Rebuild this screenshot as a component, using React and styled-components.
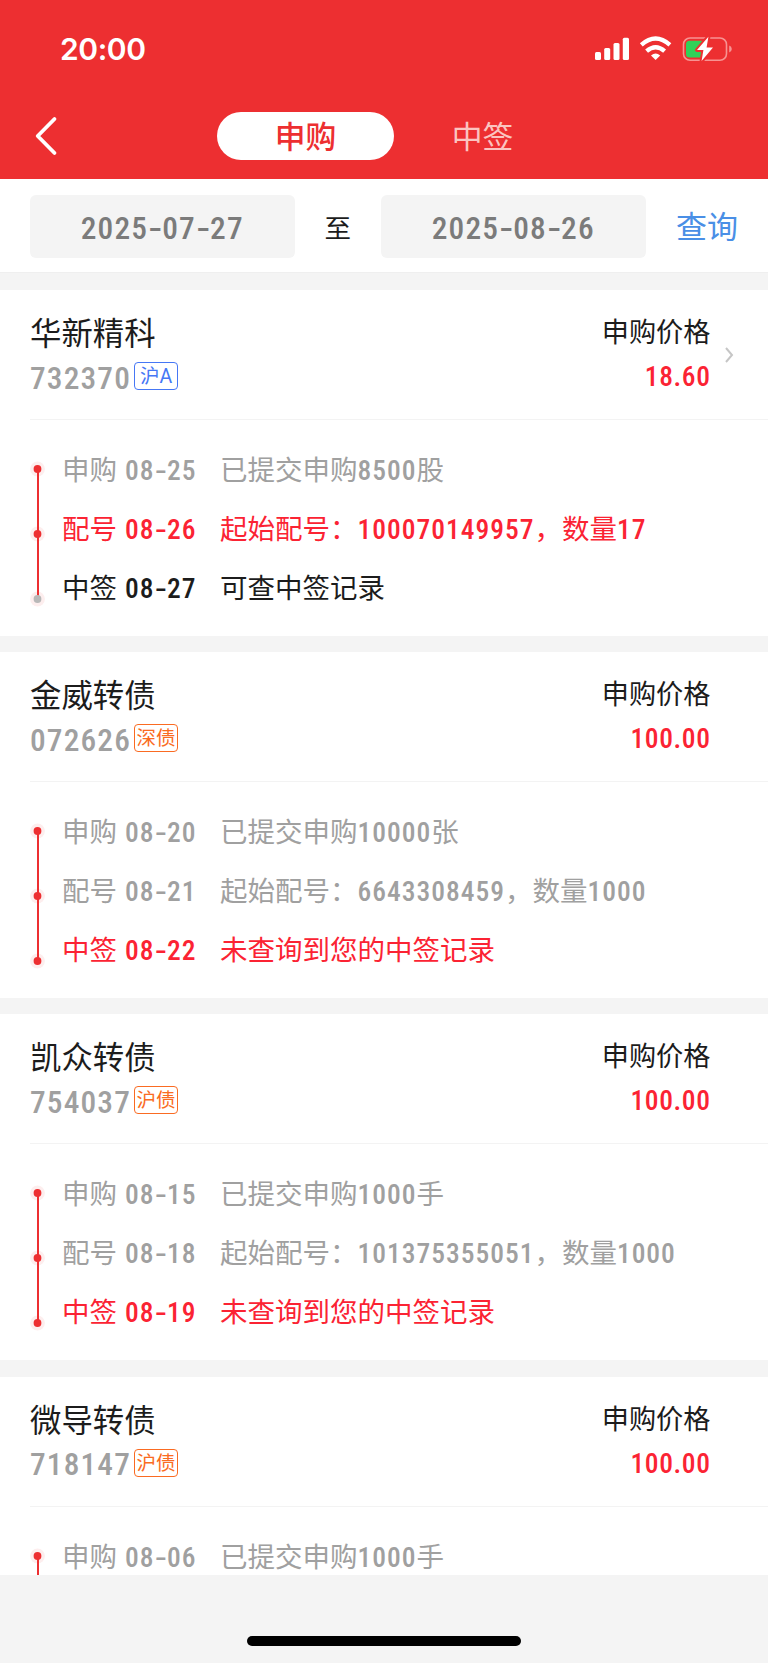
import React from "react";
import styled, { createGlobalStyle } from "styled-components";

const RED = "#ed2f31";
const TONES = { muted: "#a0a0a0", active: "#fb2333", dark: "#1c1c1c" };
const TAGS = { blue: "#4677f5", orange: "#fa6b22" };

const GlobalStyle = createGlobalStyle`
  * { box-sizing: border-box; }
  body {
    margin: 0;
    background: #f4f4f4;
    font-family: Roboto, "Noto Sans CJK SC", sans-serif;
    color: #1c1c1c;
  }
  button { border: 0; padding: 0; background: none; font-family: inherit; }
`;

const Screen = styled.div`
  width: 768px;
  height: 1663px;
  display: flex;
  flex-direction: column;
  overflow: hidden;
  background: #f4f4f4;
`;

const Header = styled.header`
  height: 179px;
  flex: none;
  background: ${RED};
`;

const StatusBar = styled.div`
  height: 98px;
  padding: 0 36px 0 60px;
  display: flex;
  align-items: center;
  justify-content: space-between;
`;

const Clock = styled.span`
  color: #fff;
  font: 600 30px/40px Inter, sans-serif;
  letter-spacing: -0.4px;
`;

const StatusIcons = styled.svg`
  display: block;
`;

const NavBar = styled.nav`
  height: 76px;
  display: flex;
  align-items: center;
`;

const BackButton = styled.button`
  width: 217px;
  height: 48px;
  padding-left: 33px;
  display: flex;
  align-items: center;
`;

const Tab = styled.button`
  width: 177px;
  height: 48px;
  border-radius: 24px;
  font-size: 30.8px;
  line-height: 51px;
  background: ${(p) => (p.$active ? "#fff" : "transparent")};
  color: ${(p) => (p.$active ? RED : "#fbc4c0")};
  font-weight: ${(p) => (p.$active ? 500 : 400)};
`;

const FilterBar = styled.section`
  height: 94px;
  flex: none;
  padding: 16px 30px 0;
  display: flex;
  align-items: flex-start;
  background: #fff;
  border-bottom: 1px solid #efefef;
`;

const DateBox = styled.div`
  width: 264.5px;
  height: 63px;
  border-radius: 6px;
  background: #f4f4f4;
  color: #7b7b7b;
  font-size: 31.4px;
  line-height: 66px;
  text-align: center;
`;

const Until = styled.span`
  width: 86.5px;
  font-size: 26.5px;
  line-height: 67px;
  text-align: center;
`;

const QueryButton = styled.button`
  margin-left: auto;
  color: #4a8fe6;
  font-size: 31px;
  line-height: 65px;
`;

const List = styled.main`
  height: 1302px;
  flex: none;
  padding-top: 17px;
  display: flex;
  flex-direction: column;
  gap: 16.2px;
  overflow: hidden;
`;

const Card = styled.article`
  height: 346px;
  flex: none;
  background: #fff;
`;

const CardHead = styled.div`
  height: 130px;
  margin-left: 30px;
  padding: 22px 32px 0 0;
  display: flex;
  border-bottom: 1px solid #f3f3f3;
`;

const Identity = styled.div`
  flex: 1;
  padding-top: 1px;
`;

const Name = styled.div`
  font-size: 31.4px;
  line-height: 44px;
`;

const CodeLine = styled.div`
  height: 42px;
  display: flex;
  align-items: center;
  color: #a0a0a0;
  font-size: 31.4px;
`;

const CodeSlot = styled.span`
  width: 104px;
`;

const Tag = styled.span`
  width: 44px;
  height: 28px;
  margin-top: -4px;
  border: 1px solid currentColor;
  border-radius: 4px;
  color: ${(p) => TAGS[p.$kind]};
  font-size: 19.5px;
  line-height: 27px;
  display: flex;
  justify-content: center;
  white-space: nowrap;
`;

const PriceBlock = styled.div`
  width: 120.5px;
  text-align: right;
`;

const PriceLabel = styled.div`
  font-size: 27.2px;
  line-height: 42px;
`;

const Price = styled.div`
  color: ${TONES.active};
  font-size: 27.5px;
  line-height: 45px;
`;

const ArrowSlot = styled.div`
  width: 25.5px;
  padding: 34px 0 0 13.5px;
`;

const CardBody = styled.div`
  display: flex;
  padding-left: 30px;
`;

const Track = styled.svg`
  display: block;
  margin-top: 41px;
  flex: none;
`;

const Steps = styled.div`
  flex: 1;
  padding: 21px 0 0 17px;
`;

const Step = styled.div`
  height: 59px;
  display: grid;
  grid-template-columns: 63px 95px 1fr;
  color: ${(p) => TONES[p.$tone]};
  font-size: 27.5px;
  line-height: 59px;
  white-space: nowrap;
`;

const Digits = styled.span`
  font-weight: 500;
  font-stretch: 75%;
  letter-spacing: ${(p) => (p.$tight ? "0.022em" : "0.036em")};
`;

const Dash = styled.span`
  font-family: Inter, sans-serif;
  letter-spacing: -0.01em;
`;

const HomeArea = styled.footer`
  flex: 1;
  display: flex;
  justify-content: center;
  align-items: flex-end;
  padding-bottom: 17px;
`;

const HomeIndicator = styled.div`
  width: 274px;
  height: 10px;
  border-radius: 5px;
  background: #000;
`;

const Figures = ({ children, tight }) => (
  <Digits $tight={tight}>
    {children.split(/(-)/).map((part, i) => (part === "-" ? <Dash key={i}>-</Dash> : part))}
  </Digits>
);

const Mixed = ({ children }) =>
  children.split(/(\d+)/).map((part, i) => (/^\d/.test(part) ? <Digits key={i}>{part}</Digits> : part));

const PhoneStatus = () => (
  <StatusIcons width="138" height="30" viewBox="594 34 138 30" fill="none">
    <g fill="#fff">
      <rect x="595" y="52" width="6" height="8" rx="1.5" />
      <rect x="604.2" y="48" width="6" height="12" rx="1.5" />
      <rect x="613.5" y="43" width="6" height="17" rx="1.5" />
      <rect x="622.8" y="37.8" width="6.2" height="22.2" rx="1.5" />
      <path d="M655.6 60 L651 55.4 Q655.6 51.4 660.2 55.4 Z" />
    </g>
    <path d="M641.3 44.8 Q655.6 32.2 669.9 44.8" stroke="#fff" strokeWidth="4.3" />
    <path d="M646.6 51.2 Q655.6 43.2 664.6 51.2" stroke="#fff" strokeWidth="4.3" />
    <rect x="683.5" y="38" width="43" height="22.3" rx="6.5" stroke="#f79392" strokeWidth="1.6" />
    <path d="M729.2 45.5 Q731.8 46.2 731.8 49 Q731.8 51.8 729.2 52.5 Z" fill="#f79392" />
    <rect x="686" y="40.7" width="18" height="16.8" rx="3.5" fill="#30d158" />
    <path
      d="M708.4 36.8 L697 50 H703.4 L701.6 61 L713 47.5 H706.6 Z"
      fill="#fff"
      stroke={RED}
      strokeWidth="4"
      strokeLinejoin="round"
      paintOrder="stroke"
    />
  </StatusIcons>
);

const BackIcon = () => (
  <svg width="26" height="42" viewBox="34 115 26 42" fill="none">
    <path d="M55.5 119 L38.7 136 L55.5 153" stroke="#fff" strokeWidth="3.8" strokeLinecap="round" strokeLinejoin="round" />
  </svg>
);

const Arrow = () => (
  <svg width="12" height="18" viewBox="0 0 12 18" fill="none" display="block">
    <path d="M2 2 L8 9 L2 16" stroke="#c6c6c6" strokeWidth="2" />
  </svg>
);

const Timeline = ({ pending }) => (
  <Track width="15" height="146" viewBox="0 0 15 146">
    {[8, 73, 138].map((y) => (
      <circle key={y} cx="7.5" cy={y} r="7.4" fill="#fdeeee" />
    ))}
    <rect x="7" y="8" width="2" height="130" fill={RED} />
    {[8, 73, 138].map((y, i) => (
      <circle key={y} cx="7.5" cy={y} r="3.9" fill={pending && i === 2 ? "#b8b8b8" : RED} />
    ))}
  </Track>
);

const OFFERS = [
  {
    name: "华新精科", code: "732370", tag: "沪A", kind: "blue", price: "18.60", linked: true,
    steps: [
      ["申购", "08-25", "已提交申购8500股", "muted"],
      ["配号", "08-26", "起始配号：100070149957，数量17", "active"],
      ["中签", "08-27", "可查中签记录", "dark"],
    ],
  },
  {
    name: "金威转债", code: "072626", tag: "深债", kind: "orange", price: "100.00",
    steps: [
      ["申购", "08-20", "已提交申购10000张", "muted"],
      ["配号", "08-21", "起始配号：6643308459，数量1000", "muted"],
      ["中签", "08-22", "未查询到您的中签记录", "active"],
    ],
  },
  {
    name: "凯众转债", code: "754037", tag: "沪债", kind: "orange", price: "100.00",
    steps: [
      ["申购", "08-15", "已提交申购1000手", "muted"],
      ["配号", "08-18", "起始配号：101375355051，数量1000", "muted"],
      ["中签", "08-19", "未查询到您的中签记录", "active"],
    ],
  },
  {
    name: "微导转债", code: "718147", tag: "沪债", kind: "orange", price: "100.00",
    steps: [["申购", "08-06", "已提交申购1000手", "muted"]],
  },
];

const Offer = ({ name, code, tag, kind, price, linked, steps }) => (
  <Card>
    <CardHead>
      <Identity>
        <Name>{name}</Name>
        <CodeLine>
          <CodeSlot><Figures>{code}</Figures></CodeSlot>
          <Tag $kind={kind}>{tag}</Tag>
        </CodeLine>
      </Identity>
      <PriceBlock>
        <PriceLabel>申购价格</PriceLabel>
        <Price><Figures tight>{price}</Figures></Price>
      </PriceBlock>
      <ArrowSlot>{linked && <Arrow />}</ArrowSlot>
    </CardHead>
    <CardBody>
      <Timeline pending={linked} />
      <Steps>
        {steps.map(([label, date, text, tone]) => (
          <Step key={label} $tone={tone}>
            <span>{label}</span>
            <Figures>{date}</Figures>
            <span><Mixed>{text}</Mixed></span>
          </Step>
        ))}
      </Steps>
    </CardBody>
  </Card>
);

export default function App() {
  return (
    <Screen>
      <GlobalStyle />
      <Header>
        <StatusBar>
          <Clock>20:00</Clock>
          <PhoneStatus />
        </StatusBar>
        <NavBar>
          <BackButton aria-label="返回"><BackIcon /></BackButton>
          <Tab $active>申购</Tab>
          <Tab>中签</Tab>
        </NavBar>
      </Header>
      <FilterBar>
        <DateBox><Figures>2025-07-27</Figures></DateBox>
        <Until>至</Until>
        <DateBox><Figures>2025-08-26</Figures></DateBox>
        <QueryButton>查询</QueryButton>
      </FilterBar>
      <List>
        {OFFERS.map((offer) => (
          <Offer key={offer.code} {...offer} />
        ))}
      </List>
      <HomeArea>
        <HomeIndicator />
      </HomeArea>
    </Screen>
  );
}
